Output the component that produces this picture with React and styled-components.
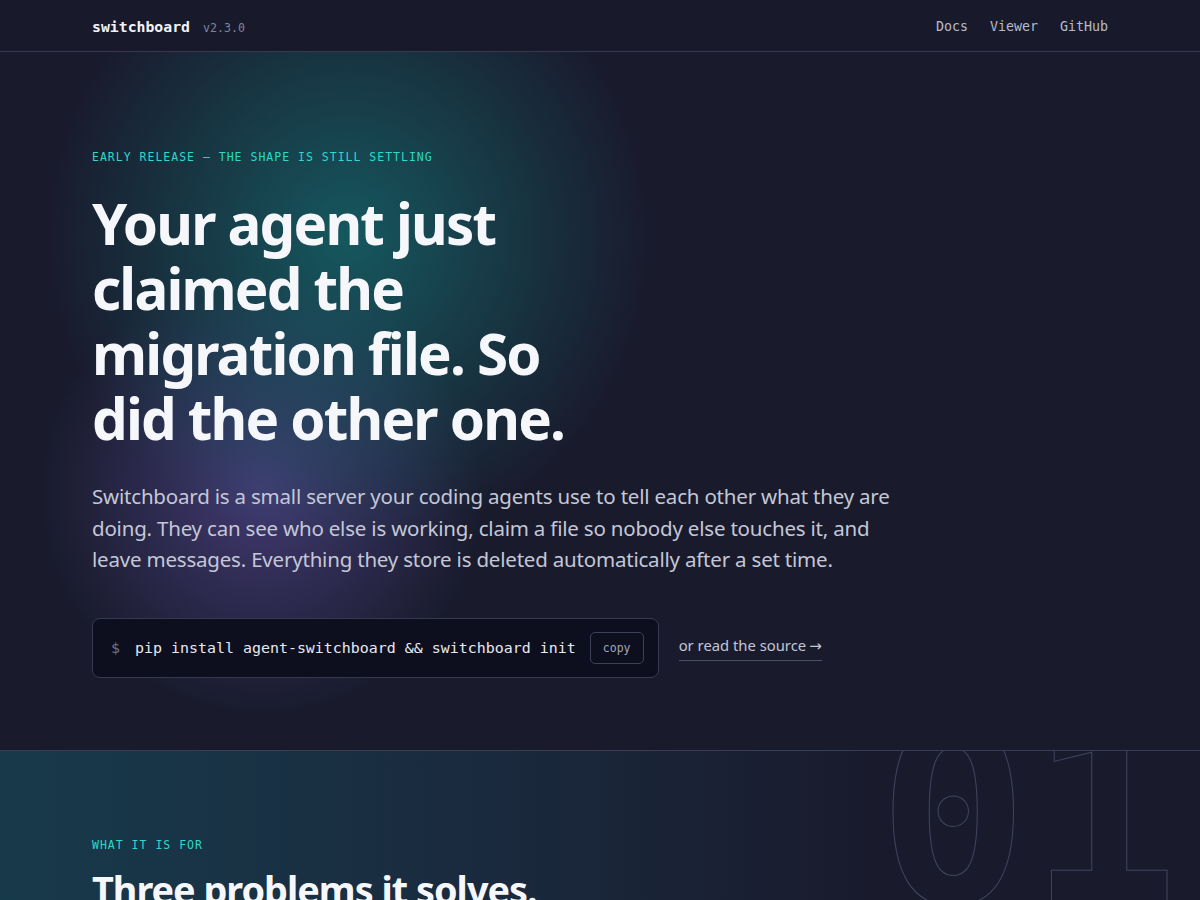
import React from "react";
import styled, { createGlobalStyle } from "styled-components";

const GlobalStyle = createGlobalStyle`
  html, body {
    margin: 0;
    padding: 0;
    background: #191b2d;
    color: #e8eaf2;
    font-family: "Noto Sans", "Open Sans", sans-serif;
  }
  * { box-sizing: border-box; }
`;

const mono = `"DejaVu Sans Mono", "Liberation Mono", monospace`;

// Layout
const Page = styled.div`
  height: 900px;
  overflow: hidden;
`;

const Container = styled.div`
  max-width: 1016px;
  margin: 0 auto;
  position: relative;
`;

// Nav
const NavBar = styled.header`
  height: 52px;
  background: #181a2b;
  border-bottom: 1px solid #35384f;
`;

const NavInner = styled(Container)`
  height: 100%;
  padding-top: 2px;
  display: flex;
  align-items: center;
  justify-content: space-between;
`;

const Brand = styled.div`
  display: flex;
  align-items: baseline;
  gap: 13px;
`;

const Logo = styled.span`
  font-family: ${mono};
  font-weight: 700;
  font-size: 14.8px;
  color: #f2f3f8;
`;

const Version = styled.span`
  font-family: ${mono};
  font-size: 11.6px;
  color: #80839a;
`;

const NavLinks = styled.nav`
  display: flex;
  gap: 22px;
`;

const NavLink = styled.a`
  font-family: ${mono};
  font-size: 13.3px;
  color: #b7bacb;
  text-decoration: none;
`;

// Hero
const Hero = styled.section`
  position: relative;
  padding: 97px 0 72px;
  background:
    radial-gradient(ellipse 300px 310px at 348px 185px, rgba(20, 116, 118, 0.68), rgba(20, 116, 118, 0) 100%),
    radial-gradient(ellipse 220px 220px at 262px 440px, rgba(92, 78, 158, 0.6), rgba(92, 78, 158, 0) 100%),
    #191b2d;
`;

const Eyebrow = styled.div`
  font-family: ${mono};
  font-size: 11.5px;
  letter-spacing: 1px;
  color: #2fd8c8;
  text-transform: uppercase;
  line-height: 16px;
`;

const Headline = styled.h1`
  margin: 26px 0 0;
  font-family: "Noto Sans", sans-serif;
  font-weight: 700;
  font-size: 56.5px;
  line-height: 65px;
  letter-spacing: -1.8px;
  color: #f6f7fb;
  max-width: 520px;
`;

const Lede = styled.p`
  margin: 30px 0 0;
  font-size: 20.5px;
  line-height: 31.5px;
  color: #c4c7d6;
  max-width: 820px;
  letter-spacing: -0.2px;
`;

const Actions = styled.div`
  margin-top: 42px;
  display: flex;
  align-items: center;
  gap: 20px;
`;

const Command = styled.div`
  display: flex;
  align-items: center;
  height: 60px;
  padding: 0 14px 0 18px;
  background: #0e0f1e;
  border: 1px solid #363950;
  border-radius: 8px;
`;

const Prompt = styled.span`
  font-family: ${mono};
  font-size: 14.95px;
  color: #6f7289;
  margin-right: 15px;
`;

const Code = styled.code`
  font-family: ${mono};
  font-size: 14.95px;
  color: #e6e8f0;
`;

const CopyButton = styled.button`
  margin-left: 14px;
  height: 32px;
  width: 54px;
  background: transparent;
  border: 1px solid #3d405a;
  border-radius: 5px;
  font-family: ${mono};
  font-size: 11.5px;
  color: #a3a6ba;
  cursor: pointer;
`;

const SourceLink = styled.a`
  font-size: 14.8px;
  color: #c3c6d6;
  text-decoration: none;
  padding-bottom: 5px;
  border-bottom: 1px solid #4b4e68;
`;

const Arrow = styled.span`
  font-family: "DejaVu Sans", sans-serif;
  font-size: 15px;
  margin-left: 3px;
`;

// Section 2
const Section = styled.section`
  position: relative;
  border-top: 1px solid #3a3d56;
  padding: 86px 0 60px;
  background: linear-gradient(90deg, #173a4b 0%, #1a2a3e 40%, #191b2d 72%);
  overflow: hidden;
`;

const BigNumber = styled.div`
  position: absolute;
  right: 21px;
  top: -60px;
  font-family: ${mono};
  font-weight: 700;
  font-size: 250px;
  line-height: 1;
  color: transparent;
  -webkit-text-stroke: 1px rgba(120, 124, 160, 0.42);
  user-select: none;
  pointer-events: none;
`;

const SectionTitle = styled.h2`
  margin: 13px 0 0;
  font-family: "Noto Sans", sans-serif;
  font-weight: 700;
  font-size: 37.8px;
  line-height: 48px;
  letter-spacing: -1px;
  color: #f6f7fb;
`;

const App = () => {
  return (
    <Page>
      <GlobalStyle />
      <NavBar>
        <NavInner>
          <Brand>
            <Logo>switchboard</Logo>
            <Version>v2.3.0</Version>
          </Brand>
          <NavLinks>
            <NavLink href="#docs">Docs</NavLink>
            <NavLink href="#viewer">Viewer</NavLink>
            <NavLink href="#github">GitHub</NavLink>
          </NavLinks>
        </NavInner>
      </NavBar>

      <Hero>
        <Container>
          <Eyebrow>Early release — the shape is still settling</Eyebrow>
          <Headline>Your agent just claimed the migration file. So did the other one.</Headline>
          <Lede>
            Switchboard is a small server your coding agents use to tell each other what they are
            doing. They can see who else is working, claim a file so nobody else touches it, and
            leave messages. Everything they store is deleted automatically after a set time.
          </Lede>
          <Actions>
            <Command>
              <Prompt>$</Prompt>
              <Code>pip install agent-switchboard &amp;&amp; switchboard init</Code>
              <CopyButton>copy</CopyButton>
            </Command>
            <SourceLink href="#source">
              or read the source<Arrow>→</Arrow>
            </SourceLink>
          </Actions>
        </Container>
      </Hero>

      <Section>
        <BigNumber>01</BigNumber>
        <Container>
          <Eyebrow>What it is for</Eyebrow>
          <SectionTitle>Three problems it solves.</SectionTitle>
        </Container>
      </Section>
    </Page>
  );
};

export default App;
